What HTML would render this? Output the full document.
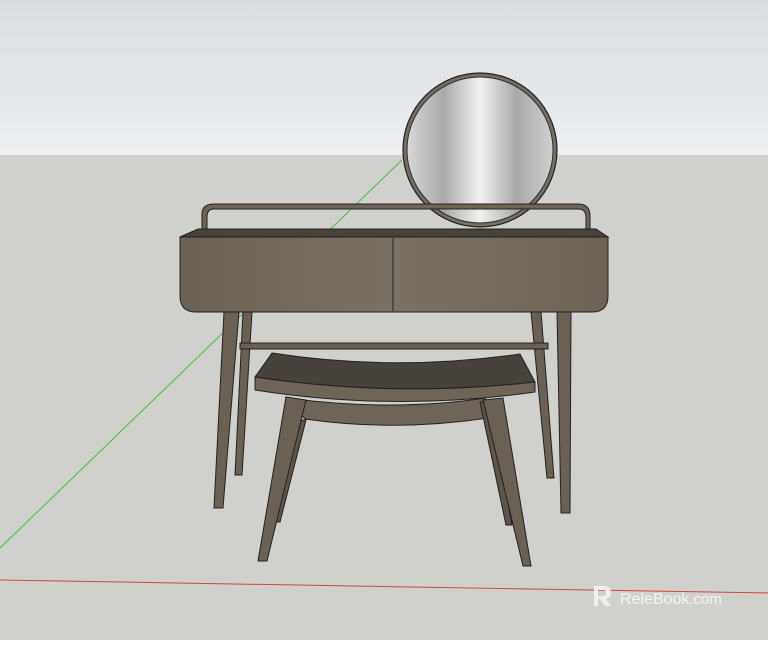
<!DOCTYPE html>
<html><head><style>
body{margin:0;width:768px;height:640px;overflow:hidden;font-family:"Liberation Sans",sans-serif}
</style></head><body>
<svg width="768" height="640" viewBox="0 0 768 640">
<defs>
<linearGradient id="sky" x1="0" y1="0" x2="0" y2="1"><stop offset="0" stop-color="#d7dce0"/><stop offset="1" stop-color="#eef0f2"/></linearGradient>
<linearGradient id="mir" x1="0" y1="0" x2="1" y2="0"><stop offset="0" stop-color="#d8d8d8"/><stop offset="0.25" stop-color="#a9a9a9"/><stop offset="0.5" stop-color="#f2f2f2"/><stop offset="0.75" stop-color="#a8a8a8"/><stop offset="1" stop-color="#d0d0d0"/></linearGradient>
<linearGradient id="wood" x1="0" y1="0" x2="1" y2="0"><stop offset="0" stop-color="#6a6054"/><stop offset="0.5" stop-color="#7a7064"/><stop offset="1" stop-color="#6c6256"/></linearGradient>
</defs>
<rect width="768" height="155" fill="url(#sky)"/>
<rect y="155" width="768" height="485" fill="#d0d1cd"/>
<line x1="402" y1="160" x2="0" y2="548" stroke="#3fbf3f" stroke-width="1"/>
<line x1="0" y1="580" x2="768" y2="593" stroke="#d04848" stroke-width="1"/>
<!-- mirror -->
<circle cx="480" cy="150" r="77" fill="#766c60" stroke="#222" stroke-width="1.2"/>
<circle cx="480" cy="150" r="73" fill="url(#mir)" stroke="#333" stroke-width="1"/>
<!-- rail -->
<path d="M202 232 V214 Q202 204 214 204 H578 Q590 204 590 216 V232 H586 V217 Q586 209 578 209 H214 Q207 209 207 217 V232 Z" fill="#6e6458" stroke="#222" stroke-width="1"/>
<!-- desk top -->
<path d="M180 237 L198 229 H596 L608 237 Z" fill="#48423c" stroke="#222" stroke-width="1"/>
<path d="M180 237 H608 V296 Q608 312 592 312 H196 Q180 312 180 296 Z" fill="url(#wood)" stroke="#222" stroke-width="1"/>
<line x1="393" y1="238" x2="393" y2="311" stroke="#222"/>
<!-- legs -->
<g fill="#6a6054" stroke="#222" stroke-width="1">
<path d="M243 312 H252 L242 475 H235 Z"/>
<path d="M531 312 H541 L554 478 H547 Z"/>
<rect x="240" y="343" width="308" height="6"/>
<path d="M224 312 H239 L223 508 H214 Z"/>
<path d="M557 312 H571 L570 513 H561 Z"/>
</g>
<!-- stool -->
<g stroke="#222" stroke-width="1">
<path d="M272 353 Q395 372 520 354 L535 382 Q395 398 255 377 Z" fill="#48423c"/>
<path d="M255 377 Q395 398 535 382 V392 Q395 412 255 390 Z" fill="#6e6458"/>
<path d="M286 398 Q395 412 485 398 L488 418 Q395 432 305 419 Z" fill="#6e6458"/>
<path d="M300 420 L306 420 L280 522 L276 522 Z" fill="#5e554a"/>
<path d="M480 402 L490 402 L512 525 L506 525 Z" fill="#5e554a"/>
<path d="M286 397 L306 400 L267 561 L258 561 Z" fill="#6a6054"/>
<path d="M483 400 L503 398 L531 566 L523 566 Z" fill="#6a6054"/>
</g>
<!-- logo -->
<g fill="#f2f2f2" opacity="0.9">
<path d="M594 586 H604 Q611 586 611 593 Q611 598 606 599 L611 606 H605 L600 599 H597 V596 H604 Q606 596 606 593 Q606 590 604 590 H598 V606 H594 Z"/>
</g>
<text x="620" y="604" font-size="16" fill="#f4f4f4" font-family="Liberation Sans,sans-serif">ReleBook<tspan font-size="15">.com</tspan></text>
</svg>
</body></html>
